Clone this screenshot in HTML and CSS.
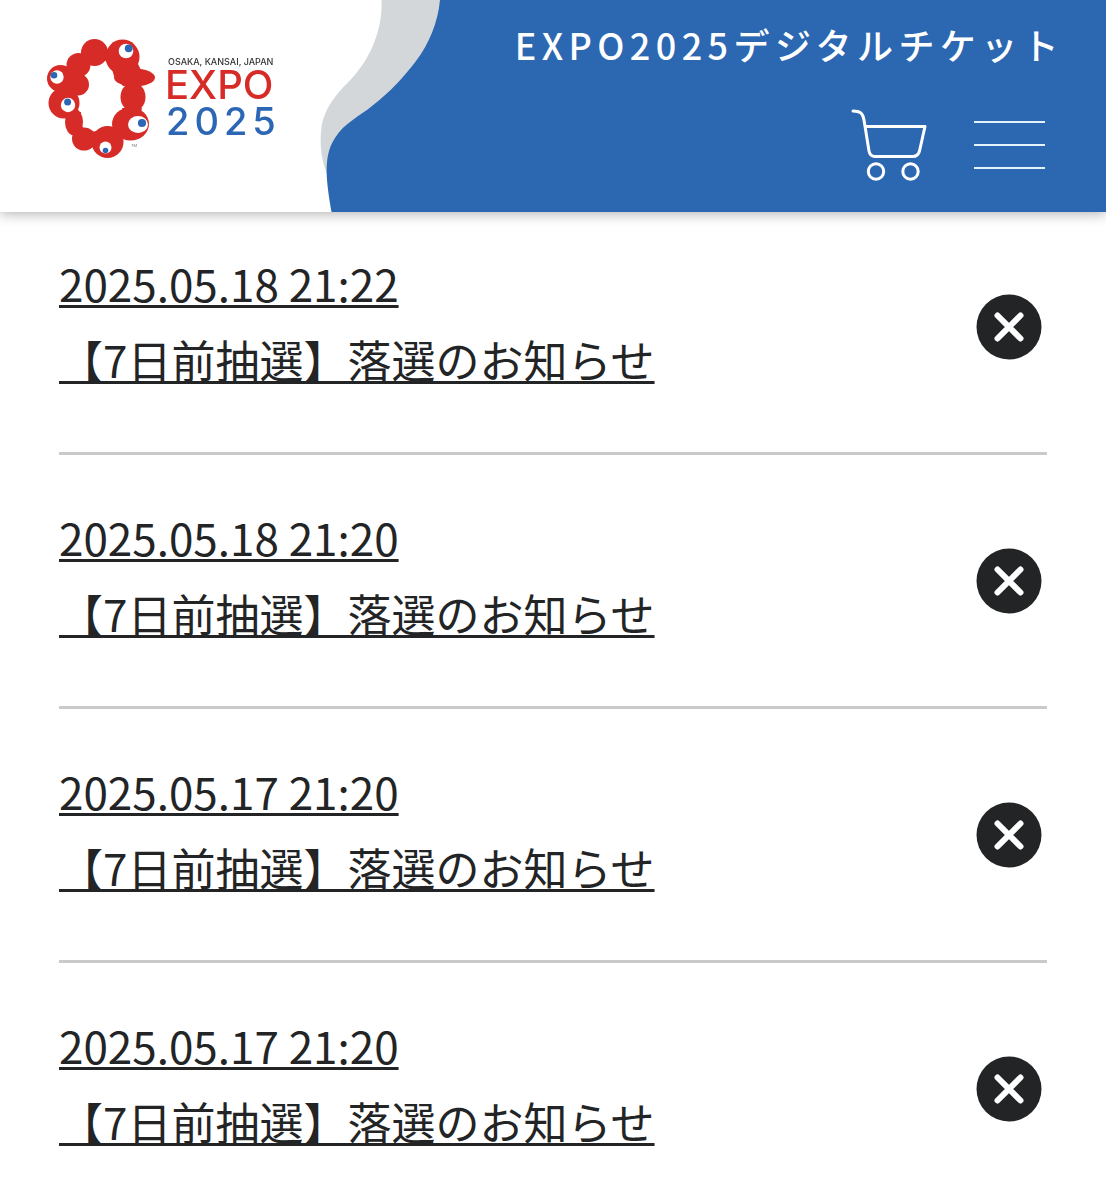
FILE: index.html
```
<!DOCTYPE html>
<html lang="ja">
<head>
<meta charset="utf-8">
<meta name="viewport" content="width=device-width, initial-scale=1">
<title>EXPO2025デジタルチケット</title>
<link rel="stylesheet" href="styles.css">
</head>
<body>
<header class="site-header">
  <a class="brand" href="#" aria-label="EXPO 2025">
    <svg class="brand-mark" viewBox="30 25 140 145" aria-hidden="true">
      <g fill="#d62b27">
        <circle cx="94.500" cy="52.500" r="13.500"/>
        <ellipse cx="122.500" cy="57" rx="17" ry="17.500"/>
        <ellipse cx="134.500" cy="77.500" rx="20.500" ry="9"/>
        <path d="M111 66L138 64L141 70L143 84L123 86L114 76z"/>
        <ellipse cx="133" cy="97" rx="12.500" ry="14.500"/>
        <ellipse cx="130.500" cy="124" rx="18.500" ry="16.500"/>
        <circle cx="107.500" cy="142" r="16"/>
        <ellipse cx="84" cy="139" rx="12" ry="11.500"/>
        <ellipse cx="74" cy="122" rx="9" ry="13.500"/>
        <ellipse cx="64" cy="103" rx="15.500" ry="15.500"/>
        <circle cx="78" cy="84.500" r="11"/>
        <circle cx="60.500" cy="78.500" r="13.500"/>
        <circle cx="78.500" cy="65" r="12"/>
        <path d="M67 66l12 8 2 20-20 4-6-10zM82 55l8 9-6 5-8-4zM106 46l4 20-6-7zM90 132l14-2-2 20-12-4zM66 116l15-4v12zM74 130l8-4 4 6-8 6zM122 108l20 0-2 8-16 0z"/>
      </g>
      <g fill="#fff">
        <circle cx="126" cy="51" r="7.300"/>
        <circle cx="57" cy="77" r="6.700"/>
        <circle cx="68" cy="105" r="7.200"/>
        <ellipse cx="138" cy="124.500" rx="10" ry="8.500"/>
        <circle cx="105.500" cy="147.500" r="6"/>
      </g>
      <g fill="#2c67b5">
        <circle cx="128.700" cy="48.300" r="3.900"/>
        <circle cx="54" cy="75.300" r="3.300"/>
        <circle cx="67.600" cy="102" r="3.500"/>
        <circle cx="142" cy="123" r="4.100"/>
        <circle cx="105.500" cy="150.500" r="2.800"/>
      </g>
      <text class="brand-tm" x="131" y="147">TM</text>
    </svg>
    <span class="brand-words">
      <span class="brand-place">OSAKA, KANSAI, JAPAN</span>
      <span class="brand-expo">EXPO</span>
      <span class="brand-year">2025</span>
    </span>
  </a>
  <svg class="wave" viewBox="0 0 121 212" aria-hidden="true">
    <path fill="#d3d7da" d="M61.500 0C63 28 51 56 36 73.500C27 85 6 100 1.500 127C-1 146 2 163 8 176L60 150L110 60L121 0Z"/>
    <path fill="#2c67b1" d="M120 0C118 22 109 44 96 61C83 78 71 91 52 106C40 116 24 123 15 138C2 157 7 184 11.500 212H121V0Z"/>
  </svg>
  <div class="header-main">
    <p class="site-title">EXPO2025デジタルチケット</p>
    <nav class="header-tools">
      <button class="tool" type="button" aria-label="カート">
        <svg class="cart-icon" viewBox="0 0 76 74" aria-hidden="true">
          <path d="M2 3C9 3 12 5 13 12L18 43Q19 48.500 24 48.500H62Q67 48.500 68.500 43L74 18.500H15"/>
          <circle cx="25" cy="63.500" r="7.700"/>
          <circle cx="59.500" cy="63.500" r="7.700"/>
        </svg>
      </button>
      <button class="tool menu" type="button" aria-label="メニュー">
        <span class="menu-line"></span><span class="menu-line"></span><span class="menu-line"></span>
      </button>
    </nav>
  </div>
</header>
<main class="notices">
  <ul class="notice-list">
    <li class="notice">
      <a class="notice-link" href="#"><time class="notice-line">2025.05.18 21:22</time><span class="notice-line">【7日前抽選】落選のお知らせ</span></a>
      <button class="remove" type="button" aria-label="削除"><svg viewBox="0 0 66 66" aria-hidden="true"><circle cx="33" cy="33" r="32.500"/><path d="M21.500 21.500L44.500 44.500M44.500 21.500L21.500 44.500"/></svg></button>
    </li>
    <li class="notice">
      <a class="notice-link" href="#"><time class="notice-line">2025.05.18 21:20</time><span class="notice-line">【7日前抽選】落選のお知らせ</span></a>
      <button class="remove" type="button" aria-label="削除"><svg viewBox="0 0 66 66" aria-hidden="true"><circle cx="33" cy="33" r="32.500"/><path d="M21.500 21.500L44.500 44.500M44.500 21.500L21.500 44.500"/></svg></button>
    </li>
    <li class="notice">
      <a class="notice-link" href="#"><time class="notice-line">2025.05.17 21:20</time><span class="notice-line">【7日前抽選】落選のお知らせ</span></a>
      <button class="remove" type="button" aria-label="削除"><svg viewBox="0 0 66 66" aria-hidden="true"><circle cx="33" cy="33" r="32.500"/><path d="M21.500 21.500L44.500 44.500M44.500 21.500L21.500 44.500"/></svg></button>
    </li>
    <li class="notice">
      <a class="notice-link" href="#"><time class="notice-line">2025.05.17 21:20</time><span class="notice-line">【7日前抽選】落選のお知らせ</span></a>
      <button class="remove" type="button" aria-label="削除"><svg viewBox="0 0 66 66" aria-hidden="true"><circle cx="33" cy="33" r="32.500"/><path d="M21.500 21.500L44.500 44.500M44.500 21.500L21.500 44.500"/></svg></button>
    </li>
  </ul>
</main>
</body>
</html>
```
FILE: styles.css
```
* { box-sizing: border-box; }

body {
  margin: 0;
  background: #fff;
  color: #222426;
  font-family: "Noto Sans CJK JP", sans-serif;
}

button {
  padding: 0;
  border: 0;
  background: none;
  cursor: pointer;
}

.site-header {
  position: fixed;
  inset: 0 0 auto;
  z-index: 1;
  display: flex;
  height: 212px;
  background: #fff;
  box-shadow: 0 2px 12px rgba(0, 0, 0, 0.3);
}

.brand {
  display: flex;
  flex: none;
  align-items: flex-start;
  width: 320px;
  padding: 25px 0 0 30px;
  text-decoration: none;
  font-family: Inter, sans-serif;
}

.brand-mark {
  flex: none;
  width: 140px;
  height: 145px;
}

.brand-tm {
  fill: #777;
  font-size: 4px;
}

.brand-words {
  display: flex;
  flex-direction: column;
  padding: 31px 0 0;
  margin-left: -5px;
  white-space: nowrap;
}

.brand-place {
  padding-left: 3px;
  color: #333;
  font-size: 9px;
  font-weight: 500;
  line-height: 11px;
}

.brand-expo {
  color: #d62b27;
  font-size: 40px;
  font-weight: 500;
  line-height: 36px;
}

.brand-year {
  padding-left: 1px;
  color: #2c67b5;
  font-size: 38px;
  font-weight: 500;
  letter-spacing: 5px;
  line-height: 36px;
}

.wave {
  flex: none;
  width: 121px;
  height: 212px;
}

.header-main {
  display: flex;
  flex: 1;
  flex-direction: column;
  align-items: flex-end;
  margin-left: -1px;
  padding: 17px 42px 0 0;
  background: #2c67b1;
}

.site-title {
  margin: 0;
  color: #fff;
  font-size: 36px;
  font-weight: 500;
  letter-spacing: 0.15em;
  line-height: 54px;
  white-space: nowrap;
}

.header-tools {
  display: flex;
  gap: 47px;
  align-items: center;
  padding: 37px 19px 0 0;
}

.tool {
  display: block;
}

.cart-icon {
  display: block;
  width: 76px;
  height: 74px;
  fill: none;
  stroke: #fff;
  stroke-width: 3;
  stroke-linecap: round;
  stroke-linejoin: round;
}

.menu {
  display: grid;
  gap: 21px;
  width: 71px;
}

.menu-line {
  height: 2px;
  background: #e4f3fa;
}

.notices {
  padding: 201px 59px 0;
}

.notice-list {
  margin: 0;
  padding: 0;
  list-style: none;
}

.notice {
  display: flex;
  align-items: center;
  justify-content: space-between;
  padding-right: 5px;
  border-bottom: 3px solid #c9caca;
}

.notice-link {
  padding: 44px 0 55px;
  color: inherit;
  font-size: 44px;
  line-height: 76px;
  text-decoration: underline;
  text-decoration-thickness: 3px;
  text-decoration-skip-ink: none;
  text-underline-offset: 3px;
}

.notice-line {
  display: block;
}

.remove {
  flex: none;
  width: 66px;
  height: 66px;
}

.remove svg {
  display: block;
  fill: #222426;
  stroke: #fff;
  stroke-width: 6;
  stroke-linecap: round;
}

.remove circle {
  stroke: none;
}
```
